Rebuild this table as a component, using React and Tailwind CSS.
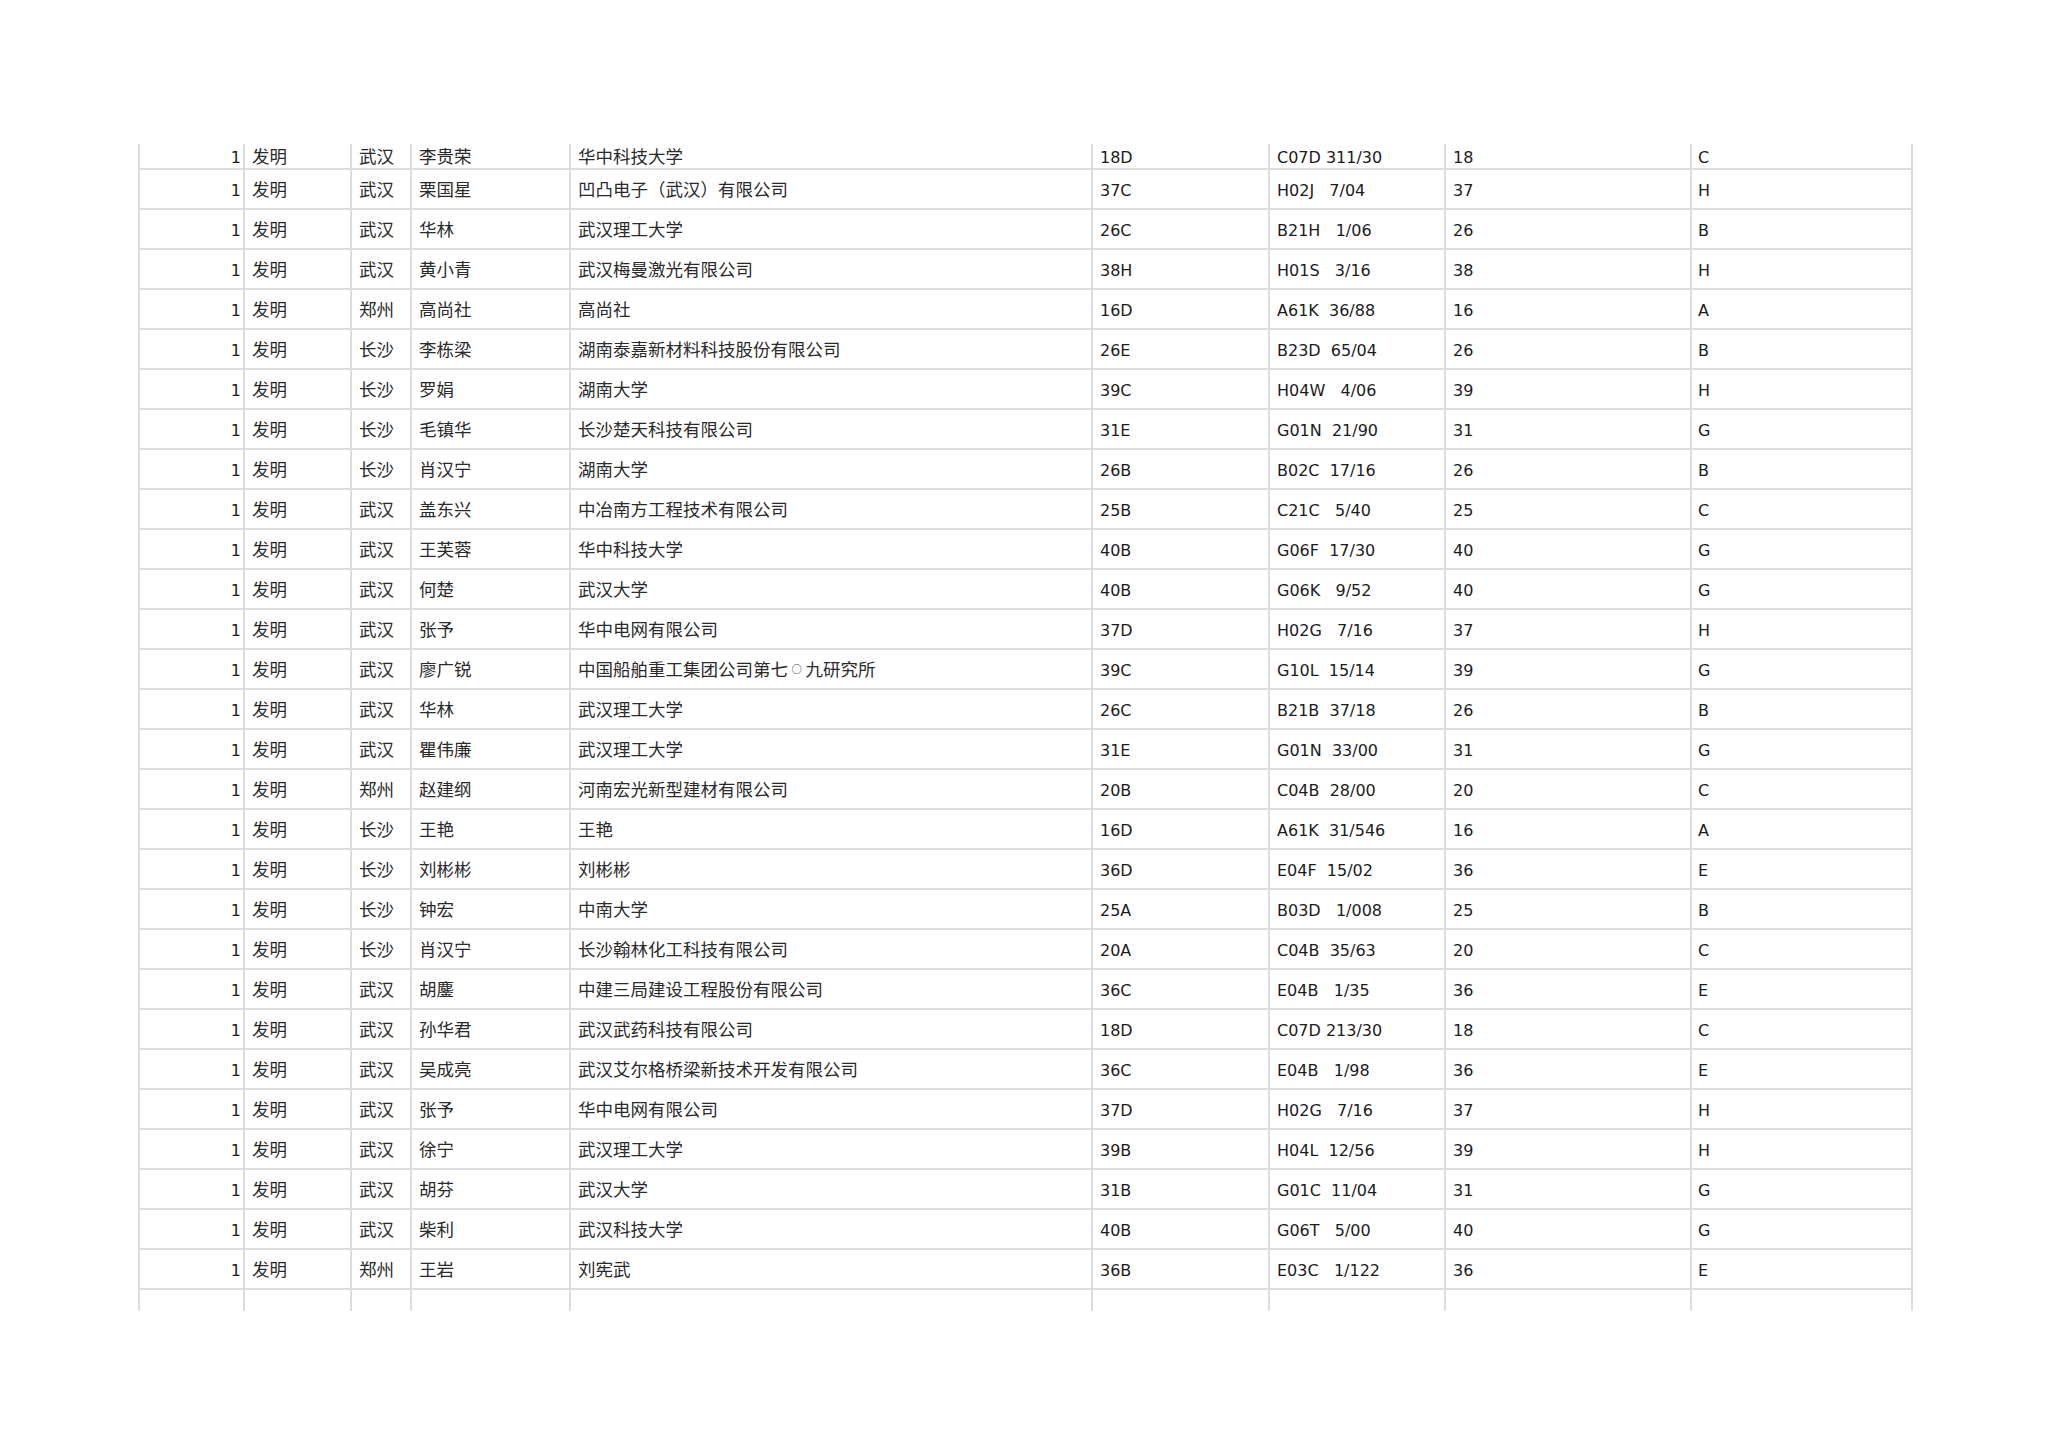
import React from "react";

const rows = [
  ["武汉", "李贵荣", "华中科技大学", "18D", "C07D 311/30", "18", "C"],
  ["武汉", "栗国星", "凹凸电子（武汉）有限公司", "37C", "H02J   7/04", "37", "H"],
  ["武汉", "华林", "武汉理工大学", "26C", "B21H   1/06", "26", "B"],
  ["武汉", "黄小青", "武汉梅曼激光有限公司", "38H", "H01S   3/16", "38", "H"],
  ["郑州", "高尚社", "高尚社", "16D", "A61K  36/88", "16", "A"],
  ["长沙", "李栋梁", "湖南泰嘉新材料科技股份有限公司", "26E", "B23D  65/04", "26", "B"],
  ["长沙", "罗娟", "湖南大学", "39C", "H04W   4/06", "39", "H"],
  ["长沙", "毛镇华", "长沙楚天科技有限公司", "31E", "G01N  21/90", "31", "G"],
  ["长沙", "肖汉宁", "湖南大学", "26B", "B02C  17/16", "26", "B"],
  ["武汉", "盖东兴", "中冶南方工程技术有限公司", "25B", "C21C   5/40", "25", "C"],
  ["武汉", "王芙蓉", "华中科技大学", "40B", "G06F  17/30", "40", "G"],
  ["武汉", "何楚", "武汉大学", "40B", "G06K   9/52", "40", "G"],
  ["武汉", "张予", "华中电网有限公司", "37D", "H02G   7/16", "37", "H"],
  ["武汉", "廖广锐", "中国船舶重工集团公司第七○九研究所", "39C", "G10L  15/14", "39", "G"],
  ["武汉", "华林", "武汉理工大学", "26C", "B21B  37/18", "26", "B"],
  ["武汉", "瞿伟廉", "武汉理工大学", "31E", "G01N  33/00", "31", "G"],
  ["郑州", "赵建纲", "河南宏光新型建材有限公司", "20B", "C04B  28/00", "20", "C"],
  ["长沙", "王艳", "王艳", "16D", "A61K  31/546", "16", "A"],
  ["长沙", "刘彬彬", "刘彬彬", "36D", "E04F  15/02", "36", "E"],
  ["长沙", "钟宏", "中南大学", "25A", "B03D   1/008", "25", "B"],
  ["长沙", "肖汉宁", "长沙翰林化工科技有限公司", "20A", "C04B  35/63", "20", "C"],
  ["武汉", "胡鏖", "中建三局建设工程股份有限公司", "36C", "E04B   1/35", "36", "E"],
  ["武汉", "孙华君", "武汉武药科技有限公司", "18D", "C07D 213/30", "18", "C"],
  ["武汉", "吴成亮", "武汉艾尔格桥梁新技术开发有限公司", "36C", "E04B   1/98", "36", "E"],
  ["武汉", "张予", "华中电网有限公司", "37D", "H02G   7/16", "37", "H"],
  ["武汉", "徐宁", "武汉理工大学", "39B", "H04L  12/56", "39", "H"],
  ["武汉", "胡芬", "武汉大学", "31B", "G01C  11/04", "31", "G"],
  ["武汉", "柴利", "武汉科技大学", "40B", "G06T   5/00", "40", "G"],
  ["郑州", "王岩", "刘宪武", "36B", "E03C   1/122", "36", "E"],
];

const latin = "font-['DejaVu_Sans','Noto_Sans_CJK_SC',sans-serif] text-[16px] leading-none text-[#1c1c1c] pt-[4px]";
const cjk = "font-['Noto_Sans_CJK_SC',sans-serif] text-[17.5px] leading-none text-[#2a2a2a] font-normal";

function renderOrg(s) {
  if (!s.includes("○")) return s;
  const [a, b] = s.split("○");
  return (
    <>
      {a}
      <span className="inline-block w-[17.5px] text-center text-[10px] align-baseline">○</span>
      {b}
    </>
  );
}

function Row({ data, h, last }) {
  const cell = `flex items-center border-r-2 border-[#dcdcdc] overflow-hidden whitespace-pre ${last ? "" : "border-b-2"} ${h}`;
  return (
    <>
      <div className={`${cell} ${latin} justify-end pr-[2px]`}>{data ? "1" : ""}</div>
      <div className={`${cell} ${cjk} pl-[7px]`}>{data ? "发明" : ""}</div>
      <div className={`${cell} ${cjk} pl-[7px]`}>{data ? data[0] : ""}</div>
      <div className={`${cell} ${cjk} pl-[7px]`}>{data ? data[1] : ""}</div>
      <div className={`${cell} ${cjk} pl-[7px]`}>{data ? renderOrg(data[2]) : ""}</div>
      <div className={`${cell} ${latin} pl-[7px]`}>{data ? data[3] : ""}</div>
      <div className={`${cell} ${latin} pl-[7px]`}>{data ? data[4] : ""}</div>
      <div className={`${cell} ${latin} pl-[7px]`}>{data ? data[5] : ""}</div>
      <div className={`${cell} ${latin} pl-[6px]`}>{data ? data[6] : ""}</div>
    </>
  );
}

export default function App() {
  return (
    <div className="w-[2048px] h-[1447px] bg-white pt-[144px] pl-[138px]">
      <div className="grid w-[1775px] border-l-2 border-[#dcdcdc] grid-cols-[105px_107px_60px_159px_522px_177px_176px_246px_221px]">
        {rows.map((r, i) => (
          <Row key={i} data={r} h={i === 0 ? "h-[26px]" : "h-[40px]"} />
        ))}
        <Row data={null} h="h-[21px]" last />
      </div>
    </div>
  );
}
